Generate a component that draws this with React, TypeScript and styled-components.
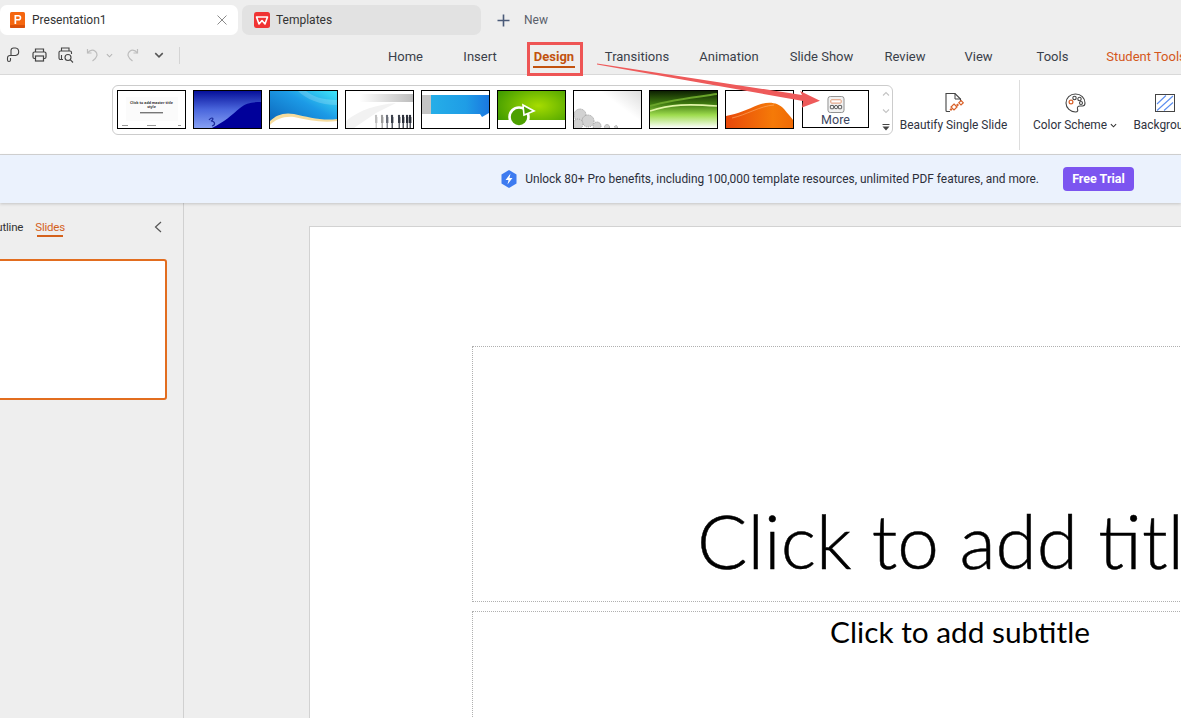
import React from 'react'
import styled, { createGlobalStyle } from 'styled-components'

const GlobalStyle = createGlobalStyle`
  html, body {
    margin: 0;
    padding: 0;
    background: #eeeeee;
  }
  * {
    box-sizing: border-box;
  }
`

const Page = styled.div`
  position: relative;
  width: 1181px;
  height: 718px;
  overflow: hidden;
  display: flex;
  flex-direction: column;
  background: #eeeeee;
  font-family: Roboto, "Noto Sans", "Liberation Sans", sans-serif;
  font-size: 12px;
  color: #2b2b2b;
`

const TabBar = styled.div`
  display: flex;
  align-items: center;
  gap: 4px;
  height: 37px;
  padding-top: 5px;
  padding-bottom: 2px;
  flex: none;
`

const DocTab = styled.div<{ $active?: boolean }>`
  display: flex;
  align-items: center;
  width: ${p => (p.$active ? '238px' : '239px')};
  height: 30px;
  padding-left: ${p => (p.$active ? '10px' : '12px')};
  padding-right: 11px;
  gap: ${p => (p.$active ? '7px' : '6px')};
  border-radius: 7px;
  background: ${p => (p.$active ? '#ffffff' : '#e2e2e2')};
`

const TabTitle = styled.span`
  flex: 1;
  font-size: 12px;
  line-height: 14px;
  margin-bottom: 1px;
  color: #333333;
`

const NewTab = styled.div`
  display: flex;
  align-items: center;
  gap: 14px;
  margin-left: 12px;
  font-size: 12px;
  color: #5a5f6b;
`

const MenuRow = styled.div`
  display: flex;
  align-items: center;
  height: 38px;
  flex: none;
  border-bottom: 1px solid #d9d9d9;
`

const QuickBar = styled.div`
  display: flex;
  align-items: center;
  width: 368px;
  padding-left: 5px;
  padding-bottom: 1px;
  flex: none;
`

const QuickIcon = styled.span<{ $w: number; $ml?: number }>`
  display: flex;
  align-items: center;
  justify-content: center;
  width: ${p => p.$w}px;
  margin-left: ${p => p.$ml ?? 0}px;
`

const QuickDivider = styled.span`
  width: 1px;
  height: 17px;
  background: #d4d4d4;
  margin-left: 9px;
`

const NavItem = styled.div<{ $w: number; $active?: boolean; $accent?: boolean }>`
  position: relative;
  width: ${p => p.$w}px;
  flex: none;
  padding-top: 1px;
  text-align: center;
  white-space: nowrap;
  font-size: 13px;
  font-weight: ${p => (p.$active ? 700 : 400)};
  color: ${p => (p.$active ? '#c2520f' : p.$accent ? '#d4581c' : '#3a3f4a')};
  ${p =>
    p.$active &&
    `&::after {
      content: '';
      position: absolute;
      left: 16px;
      right: 16px;
      bottom: -4px;
      height: 2px;
      background: #c2520f;
    }`}
`

const Ribbon = styled.div`
  display: flex;
  align-items: flex-start;
  height: 80px;
  padding-top: 10px;
  padding-left: 112px;
  background: #ffffff;
  border-bottom: 1px solid #d4d4d4;
  flex: none;
`

const Gallery = styled.div`
  display: flex;
  width: 781px;
  height: 50px;
  padding: 4px 0 0 4px;
  gap: 7px;
  flex: none;
  border: 1px solid #cccccc;
  border-radius: 6px;
`

const Thumb = styled.div`
  width: 69px;
  height: 39px;
  flex: none;
  border: 1px solid #000000;
  background: #ffffff;
  overflow: hidden;
  svg {
    display: block;
    width: 100%;
    height: 100%;
  }
`

const MoreThumb = styled.div`
  display: flex;
  flex-direction: column;
  align-items: center;
  width: 67px;
  height: 38px;
  margin-left: 1px;
  padding-top: 5px;
  flex: none;
  border: 1px solid #000000;
  font-size: 12.5px;
  line-height: 14px;
  color: #3c4560;
`

const ScrollColumn = styled.div`
  display: flex;
  flex-direction: column;
  align-items: center;
  width: 18px;
  margin-left: 3px;
  padding-top: 1px;
  gap: 10.5px;
`

const RibbonButton = styled.div<{ $w: number; $ml: number }>`
  display: flex;
  flex-direction: column;
  align-items: center;
  width: ${p => p.$w}px;
  margin-left: ${p => p.$ml}px;
  padding-top: 7px;
  flex: none;
  font-size: 11.9px;
  white-space: nowrap;
  color: #2f3340;
`

const RibbonIconSlot = styled.div`
  display: flex;
  align-items: center;
  height: 21px;
`

const RibbonLabel = styled.div`
  display: flex;
  align-items: center;
  gap: 3px;
  margin-top: 4px;
  line-height: 16px;
`

const RibbonDivider = styled.div`
  width: 1px;
  height: 70px;
  margin-top: -5px;
  margin-left: 12px;
  background: #dddddd;
  flex: none;
`

const Banner = styled.div`
  position: relative;
  display: flex;
  align-items: center;
  justify-content: flex-end;
  height: 48px;
  padding-right: 47px;
  gap: 8px;
  flex: none;
  font-size: 11.9px;
  color: #2b2f3a;
  background: #ebf2fd;
  box-shadow: 0 1px 3px rgba(0, 0, 0, 0.18);
`

const TrialButton = styled.div`
  width: 71px;
  height: 24px;
  margin-left: 16px;
  line-height: 23px;
  text-align: center;
  border-radius: 4px;
  font-size: 12.5px;
  font-weight: 700;
  color: #ffffff;
  background: #7c55f0;
`

const Workspace = styled.div`
  display: flex;
  flex: 1;
  min-height: 0;
`

const SidePanel = styled.div`
  width: 184px;
  flex: none;
  border-right: 1px solid #d0d0d0;
  overflow: hidden;
`

const PanelTabs = styled.div`
  display: flex;
  align-items: center;
  height: 56px;
  padding-bottom: 8px;
`

const PanelTabGroup = styled.div`
  display: flex;
  justify-content: flex-end;
  gap: 12px;
  width: 65px;
  flex: none;
`

const PanelTab = styled.span<{ $active?: boolean }>`
  position: relative;
  flex: none;
  font-size: 11.5px;
  letter-spacing: -0.2px;
  color: ${p => (p.$active ? '#d4611c' : '#333333')};
  ${p =>
    p.$active &&
    `&::after {
      content: '';
      position: absolute;
      left: 2px;
      right: 2px;
      bottom: -3px;
      height: 2px;
      background: #d4611c;
    }`}
`

const CollapseIcon = styled.span`
  display: flex;
  margin-left: 89px;
`

const SlideThumb = styled.div`
  width: 187px;
  height: 141px;
  margin-left: -20px;
  background: #ffffff;
  border: 2px solid #e26d1f;
  border-radius: 3px;
`

const Stage = styled.div`
  flex: 1;
  min-width: 0;
  padding: 23px 0 0 125px;
  overflow: hidden;
`

const Slide = styled.div`
  width: 1300px;
  height: 700px;
  padding: 119px 0 0 162px;
  background: #ffffff;
  border: 1px solid #d2d2d2;
  border-right: none;
`

const Placeholder = styled.div<{ $h: number; $top?: boolean }>`
  display: flex;
  justify-content: center;
  align-items: ${p => (p.$top ? 'flex-start' : 'flex-end')};
  width: 976px;
  height: ${p => p.$h}px;
  margin-bottom: 9px;
  border: 1px dotted #b0b0b0;
  font-family: Lato, "Noto Sans", sans-serif;
  color: #000000;
`

const TitleText = styled.span`
  font-size: 74.8px;
  font-weight: 300;
  line-height: 88px;
  white-space: nowrap;
  margin-bottom: 17px;
  -webkit-text-stroke: 0.5px #000000;
`

const SubtitleText = styled.span`
  font-size: 29.8px;
  line-height: 40px;
  white-space: nowrap;
`

const RedBox = styled.div`
  position: absolute;
  left: 527px;
  top: 42px;
  width: 56px;
  height: 34px;
  border: 3px solid #ee5555;
`

const ArrowLayer = styled.svg`
  position: absolute;
  left: 0;
  top: 0;
  width: 1181px;
  height: 718px;
  pointer-events: none;
`

const navItems = [
  { label: 'Home', w: 75 },
  { label: 'Insert', w: 74 },
  { label: 'Design', w: 74, active: true },
  { label: 'Transitions', w: 92 },
  { label: 'Animation', w: 92 },
  { label: 'Slide Show', w: 93 },
  { label: 'Review', w: 74 },
  { label: 'View', w: 73 },
  { label: 'Tools', w: 75 },
  { label: 'Student Tools', w: 112, accent: true },
]

const Chevron = ({ size = 8, color = '#555555' }: { size?: number; color?: string }) => (
  <svg width={size} height={size} viewBox="0 0 8 8" fill="none" stroke={color} strokeWidth="1.2">
    <path d="M1 2.5 L4 5.5 L7 2.5" />
  </svg>
)

const PptLogo = () => (
  <svg width="15" height="16" viewBox="0 0 15 16">
    <rect width="15" height="16" rx="1.5" fill="#f5660f" />
    <rect y="13" width="15" height="3" rx="1" fill="#d9500a" />
    <path d="M4.5 3 H8.5 A2.8 2.8 0 0 1 8.5 8.6 H6.2 V12 H4.5 Z M6.2 4.5 V7.1 H8.4 A1.3 1.3 0 0 0 8.4 4.5 Z" fill="#ffffff" />
  </svg>
)

const WpsLogo = () => (
  <svg width="16" height="16" viewBox="0 0 16 16">
    <rect width="16" height="16" rx="2.5" fill="#f03333" />
    <path d="M2.5 5 H13.5 L11 12 L8 8.5 L5 12 Z" fill="none" stroke="#ffffff" strokeWidth="1.6" strokeLinejoin="round" />
  </svg>
)

const CloseIcon = () => (
  <svg width="10" height="10" viewBox="0 0 10 10" stroke="#8a8a8a" strokeWidth="1">
    <path d="M0.5 0.5 L9.5 9.5 M9.5 0.5 L0.5 9.5" />
  </svg>
)

const PlusIcon = () => (
  <svg width="13" height="13" viewBox="0 0 13 13" stroke="#4a5a78" strokeWidth="1.6">
    <path d="M6.5 0.5 V12.5 M0.5 6.5 H12.5" />
  </svg>
)

const SaveAsIcon = () => (
  <svg width="15" height="16" viewBox="0 0 15 16" fill="none" stroke="#444444" strokeWidth="1.1">
    <path d="M5 8.5 V3.5 A2.6 2.6 0 0 1 7.6 1 H9.5 A3.8 3.8 0 0 1 9.5 8.5 H4 A2.4 2.4 0 0 0 1.5 11 V13 A1.5 1.5 0 0 0 4.5 13 V11" />
  </svg>
)

const PrintIcon = () => (
  <svg width="15" height="14" viewBox="0 0 15 14" fill="none" stroke="#444444" strokeWidth="1.2">
    <path d="M3.5 4 V1 H11.5 V4" />
    <rect x="1" y="4" width="13" height="6.5" rx="1.5" />
    <rect x="3.5" y="8" width="8" height="5" fill="#eeeeee" />
  </svg>
)

const PreviewIcon = () => (
  <svg width="16" height="16" viewBox="0 0 16 16" fill="none" stroke="#444444" strokeWidth="1.1">
    <path d="M3.5 4 V1 H11 V4" />
    <path d="M5 12.5 H2.5 A1.5 1.5 0 0 1 1 11 V5.5 A1.5 1.5 0 0 1 2.5 4 H12 A1.5 1.5 0 0 1 13.5 5.5 V7" />
    <path d="M3.5 8 V13" />
    <circle cx="10" cy="10.5" r="3" />
    <path d="M12.2 12.7 L15 15.5" />
  </svg>
)

const UndoIcon = ({ flip }: { flip?: boolean }) => (
  <svg width="13" height="14" viewBox="0 0 13 14" fill="none" stroke="#bdbdbd" strokeWidth="1.2" style={flip ? { transform: 'scaleX(-1)' } : undefined}>
    <path d="M1.5 1 V5 H5.5" />
    <path d="M1.5 5 C4 2 7 1.5 9.5 3.5 C12 6 11.5 9.5 6.5 13" />
  </svg>
)

const ArrowUpSmall = ({ down }: { down?: boolean }) => (
  <svg width="8" height="6" viewBox="0 0 8 6" fill="none" stroke="#c4c4c4" strokeWidth="1.1">
    <path d={down ? 'M1 1.5 L4 4.5 L7 1.5' : 'M1 4.5 L4 1.5 L7 4.5'} />
  </svg>
)

const DropMoreIcon = () => (
  <svg width="8" height="7" viewBox="0 0 8 7" fill="#444444">
    <rect x="0.5" width="7" height="1" />
    <path d="M0.5 2.5 H7.5 L4 6.5 Z" />
  </svg>
)

const MoreIcon = () => (
  <svg width="18" height="18" viewBox="0 0 18 18" fill="none">
    <rect x="0.5" y="0.5" width="17" height="17" rx="2.5" fill="#f1f1f1" stroke="#8a8a8a" />
    <rect x="3.5" y="4" width="11" height="3.5" rx="0.8" fill="#fff" stroke="#e0916a" />
    <rect x="3" y="10" width="3.5" height="3.5" rx="0.6" stroke="#555555" />
    <rect x="7.3" y="10" width="3.5" height="3.5" rx="1.7" stroke="#555555" />
    <rect x="11.5" y="10" width="3.5" height="3.5" rx="0.6" stroke="#555555" />
  </svg>
)

const BeautifyIcon = () => (
  <svg width="20" height="21" viewBox="0 0 20 21" fill="none">
    <path d="M6 19.5 H3 A1 1 0 0 1 2 18.5 V1.5 H11 L16.5 7 V9" stroke="#444444" strokeWidth="1.1" />
    <path d="M11 1.5 V7 H16.5" stroke="#444444" strokeWidth="1" />
    <path d="M17 8.5 L19.3 10.8 L17 13 L14.8 10.8 Z" stroke="#d9622a" strokeWidth="1.2" />
    <path d="M10 12 L13 15 L10 18 L7 15 Z" stroke="#d9622a" strokeWidth="1.2" />
    <path d="M13.5 11.5 L15 13 L13.5 14.5 L12 13 Z" fill="#d9622a" />
    <path d="M7 16 L8.5 17.5 L7 19 L5.5 17.5 Z" fill="#d9622a" />
  </svg>
)

const PaletteIcon = () => (
  <svg width="21" height="20" viewBox="0 0 21 20" fill="none" stroke="#444444" strokeWidth="1.1">
    <path d="M10.5 1 C5 1 1 5 1 10 C1 15 5.5 19 10.5 19 C13 19 13 17.5 12.5 16 C12 14 13 13 15 13 H17.5 C19 13 20 12 20 10 C20 5 16 1 10.5 1 Z" />
    <circle cx="6" cy="9" r="1.9" stroke="#d9622a" strokeWidth="1.2" />
    <circle cx="9.5" cy="5" r="1.7" />
    <circle cx="14.5" cy="6" r="1.7" />
    <circle cx="16" cy="10" r="1.5" />
  </svg>
)

const BackgroundIcon = () => (
  <svg width="20" height="18" viewBox="0 0 20 18" fill="none">
    <rect x="0.5" y="0.5" width="19" height="17" fill="#ffffff" stroke="#444444" />
    <path d="M2 10 L11 1.5 M2 16.5 L18 2 M9 16.5 L18 8.5" stroke="#5b8def" strokeWidth="1.1" />
  </svg>
)

const ProBadge = () => (
  <svg width="16" height="18" viewBox="0 0 16 18">
    <path d="M8 0 L15.5 4.5 V13.5 L8 18 L0.5 13.5 V4.5 Z" fill="#3d7bf0" />
    <path d="M9.5 3.5 L4.5 10 H7.5 L6.5 14.5 L11.5 8 H8.5 Z" fill="#ffffff" />
  </svg>
)

const CollapseChevron = () => (
  <svg width="8" height="12" viewBox="0 0 8 12" fill="none" stroke="#555555" strokeWidth="1.2">
    <path d="M7 1 L1.5 6 L7 11" />
  </svg>
)

const crowd = [
  { x: 29, tone: '#c0c0c0' },
  { x: 35, tone: '#9c9c9c' },
  { x: 40, tone: '#6a6e78' },
  { x: 45, tone: '#3a3f4a' },
  { x: 52, tone: '#3a3f4a' },
  { x: 56, tone: '#2a2e38' },
  { x: 60, tone: '#2a2e38' },
  { x: 63, tone: '#2a2e38' },
]

const gears = [
  [6, 24, 6],
  [14, 30, 6],
  [4, 33, 5],
  [23, 35, 4],
  [33, 36, 2.5],
  [42, 36, 1.5],
]

// the template previews, drawn rough since they are only 69px wide
const themeArt: React.ReactNode[] = [
  <svg key="t1" viewBox="0 0 67 37">
    <rect x="8" y="6" width="52" height="24" fill="#fbfbfb" />
    <text x="33.5" y="13" fontSize="3.6" fontWeight="700" textAnchor="middle" fill="#333" fontFamily="Noto Sans, sans-serif">Click to add master title</text>
    <text x="33.5" y="17" fontSize="3.6" fontWeight="700" textAnchor="middle" fill="#333" fontFamily="Noto Sans, sans-serif">style</text>
    <rect x="22" y="21" width="23" height="1.4" fill="#777" />
    <rect x="4" y="34" width="6" height="1" fill="#999" />
    <rect x="29" y="34" width="9" height="1" fill="#999" />
    <rect x="60" y="34" width="3" height="1" fill="#999" />
  </svg>,
  <svg key="t2" viewBox="0 0 67 37">
    <defs>
      <linearGradient id="g2" x1="0" y1="0" x2="0" y2="1">
        <stop offset="0" stopColor="#06109a" />
        <stop offset="0.5" stopColor="#4a66dc" />
        <stop offset="1" stopColor="#86a0f4" />
      </linearGradient>
    </defs>
    <rect width="67" height="37" fill="url(#g2)" />
    <path d="M18 37 C30 31 38 24 46 17 C52 12 58 11 67 11 V37 Z" fill="#00009a" />
    <path d="M15 29 C18 25 21 28 17 30 C21 30 22 34 18 35" fill="none" stroke="#1a2a9a" strokeWidth="1.2" />
  </svg>,
  <svg key="t3" viewBox="0 0 67 37">
    <defs>
      <linearGradient id="g3" x1="0" y1="1" x2="1" y2="0">
        <stop offset="0" stopColor="#0a5fb5" />
        <stop offset="0.6" stopColor="#1c9ae6" />
        <stop offset="1" stopColor="#3fe6f8" />
      </linearGradient>
    </defs>
    <rect width="67" height="37" fill="url(#g3)" />
    <path d="M28 0 C36 8 50 14 67 14 V9 C52 9 42 5 36 0 Z" fill="#ffffff" opacity="0.18" />
    <path d="M0 30 C6 24 14 21 24 23 C38 26 52 30 67 28 V37 H0 Z" fill="#f6dc9e" />
    <path d="M0 34 C6 28 14 25 24 26 C38 29 52 32 67 30 V37 H0 Z" fill="#ffffff" />
  </svg>,
  <svg key="t4" viewBox="0 0 67 37">
    <defs>
      <linearGradient id="g4" x1="0" y1="0" x2="1" y2="0">
        <stop offset="0.2" stopColor="#ffffff" />
        <stop offset="1" stopColor="#bcbcbc" />
      </linearGradient>
    </defs>
    <rect width="67" height="37" fill="#ffffff" />
    <rect y="3" width="67" height="8" fill="url(#g4)" />
    <path d="M0 30 C15 18 30 14 50 12 L30 22 L8 37 H0 Z" fill="#f2f2f2" />
    {crowd.map(p => (
      <g key={p.x} fill={p.tone}>
        <circle cx={p.x + 1} cy="25" r="1.2" />
        <rect x={p.x} y="26" width="2.4" height="6" />
        <rect x={p.x + 0.6} y="32" width="1.2" height="5" />
      </g>
    ))}
  </svg>,
  <svg key="t5" viewBox="0 0 67 37">
    <defs>
      <linearGradient id="g5" x1="0" y1="0" x2="1" y2="0">
        <stop offset="0" stopColor="#25aee8" />
        <stop offset="0.6" stopColor="#1f9de6" />
        <stop offset="1" stopColor="#1a78e0" />
      </linearGradient>
    </defs>
    <rect width="67" height="37" fill="#ffffff" />
    <rect y="4" width="9" height="19" fill="#c4c4c4" />
    <path d="M9 4 H67 V22 L60 26 L58 23 H9 Z" fill="url(#g5)" />
  </svg>,
  <svg key="t6" viewBox="0 0 67 37">
    <defs>
      <radialGradient id="g6" cx="0.6" cy="0.4" r="0.7">
        <stop offset="0" stopColor="#a6dc00" />
        <stop offset="1" stopColor="#3f9a00" />
      </radialGradient>
    </defs>
    <rect width="67" height="37" fill="url(#g6)" />
    <rect y="29" width="67" height="8" fill="#ffffff" />
    <circle cx="21" cy="26" r="9.5" fill="#4da000" stroke="#ffffff" strokeWidth="2.6" />
    <path d="M25 14 L36 20 L26 24 Z" fill="#4da000" stroke="#ffffff" strokeWidth="1.6" />
  </svg>,
  <svg key="t7" viewBox="0 0 67 37">
    <defs>
      <linearGradient id="g7" x1="1" y1="0" x2="0.6" y2="0.3">
        <stop offset="0" stopColor="#dddddd" />
        <stop offset="1" stopColor="#ffffff" />
      </linearGradient>
    </defs>
    <rect width="67" height="37" fill="url(#g7)" />
    {gears.map(([x, y, r]) => (
      <circle key={`${x}-${y}`} cx={x} cy={y} r={r} fill="#d2d2d2" stroke="#9a9a9a" strokeWidth="1" strokeDasharray="1 1" />
    ))}
  </svg>,
  <svg key="t8" viewBox="0 0 67 37">
    <defs>
      <linearGradient id="g8" x1="0" y1="0" x2="0" y2="1">
        <stop offset="0" stopColor="#0e2202" />
        <stop offset="0.35" stopColor="#3f7a10" />
        <stop offset="0.65" stopColor="#9edc4e" />
        <stop offset="1" stopColor="#ffffff" />
      </linearGradient>
    </defs>
    <rect width="67" height="37" fill="url(#g8)" />
    <path d="M0 20 C20 13 40 13 67 15" fill="none" stroke="#e2f6a8" strokeWidth="1.6" />
    <path d="M0 15 C20 9 45 6 67 3" fill="none" stroke="#6aa42a" strokeWidth="2" />
  </svg>,
  <svg key="t9" viewBox="0 0 67 37">
    <defs>
      <linearGradient id="g9" x1="0" y1="0" x2="1" y2="0">
        <stop offset="0" stopColor="#e8480a" />
        <stop offset="0.7" stopColor="#f57a08" />
        <stop offset="1" stopColor="#f06a06" />
      </linearGradient>
    </defs>
    <rect width="67" height="37" fill="#ffffff" />
    <path d="M0 25 C12 23 22 18 32 14 C42 10 52 11 58 18 C62 23 65 26 67 29 V37 H0 Z" fill="url(#g9)" />
    <path d="M6 27 C20 24 34 15 48 14" fill="none" stroke="#ffb070" strokeWidth="0.6" />
  </svg>,
]

export default function App() {
  return (
    <Page>
      <GlobalStyle />
      <TabBar>
        <DocTab $active>
          <PptLogo />
          <TabTitle>Presentation1</TabTitle>
          <CloseIcon />
        </DocTab>
        <DocTab>
          <WpsLogo />
          <TabTitle>Templates</TabTitle>
        </DocTab>
        <NewTab>
          <PlusIcon />
          <span>New</span>
        </NewTab>
      </TabBar>

      <MenuRow>
        <QuickBar>
          <QuickIcon $w={16}><SaveAsIcon /></QuickIcon>
          <QuickIcon $w={36}><PrintIcon /></QuickIcon>
          <QuickIcon $w={17}><PreviewIcon /></QuickIcon>
          <QuickIcon $w={20} $ml={8}><UndoIcon /></QuickIcon>
          <QuickIcon $w={14}><Chevron size={7} color="#b5b5b5" /></QuickIcon>
          <QuickIcon $w={32}><UndoIcon flip /></QuickIcon>
          <QuickIcon $w={22}><Chevron size={10} /></QuickIcon>
          <QuickDivider />
        </QuickBar>
        {navItems.map(item => (
          <NavItem key={item.label} $w={item.w} $active={item.active} $accent={item.accent}>
            {item.label}
          </NavItem>
        ))}
      </MenuRow>

      <Ribbon>
        <Gallery>
          {themeArt.map((art, i) => (
            <Thumb key={i}>{art}</Thumb>
          ))}
          <MoreThumb>
            <MoreIcon />
            <span>More</span>
          </MoreThumb>
          <ScrollColumn>
            <ArrowUpSmall />
            <ArrowUpSmall down />
            <DropMoreIcon />
          </ScrollColumn>
        </Gallery>
        <RibbonButton $w={107} $ml={7}>
          <RibbonIconSlot><BeautifyIcon /></RibbonIconSlot>
          <RibbonLabel>Beautify Single Slide</RibbonLabel>
        </RibbonButton>
        <RibbonDivider />
        <RibbonButton $w={84} $ml={13}>
          <RibbonIconSlot><PaletteIcon /></RibbonIconSlot>
          <RibbonLabel>
            Color Scheme
            <Chevron size={7} color="#333333" />
          </RibbonLabel>
        </RibbonButton>
        <RibbonButton $w={72} $ml={12}>
          <RibbonIconSlot><BackgroundIcon /></RibbonIconSlot>
          <RibbonLabel>Background</RibbonLabel>
        </RibbonButton>
      </Ribbon>

      <Banner>
        <ProBadge />
        <span>Unlock 80+ Pro benefits, including 100,000 template resources, unlimited PDF features, and more.</span>
        <TrialButton>Free Trial</TrialButton>
      </Banner>

      <Workspace>
        <SidePanel>
          <PanelTabs>
            <PanelTabGroup>
              <PanelTab>Outline</PanelTab>
              <PanelTab $active>Slides</PanelTab>
            </PanelTabGroup>
            <CollapseIcon><CollapseChevron /></CollapseIcon>
          </PanelTabs>
          <SlideThumb />
        </SidePanel>
        <Stage>
          <Slide>
            <Placeholder $h={256}>
              <TitleText>Click to add title</TitleText>
            </Placeholder>
            <Placeholder $h={200} $top>
              <SubtitleText>Click to add subtitle</SubtitleText>
            </Placeholder>
          </Slide>
        </Stage>
      </Workspace>

      <RedBox />
      <ArrowLayer viewBox="0 0 1181 718">
        <polygon points="597,63.5 802,95 800,91 820,100.7 802,107.5 803,101 597,64.5" fill="#ee5a5a" />
      </ArrowLayer>
    </Page>
  )
}
